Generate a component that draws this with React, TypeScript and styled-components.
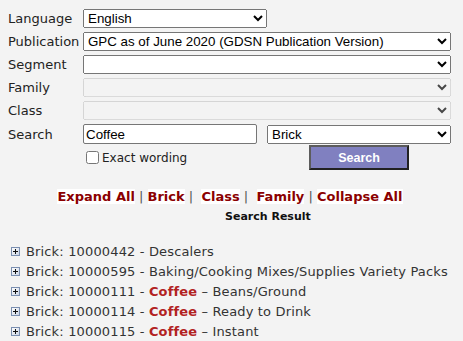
import styled, { createGlobalStyle } from "styled-components";

const GlobalStyle = createGlobalStyle`
  body {
    margin: 8px;
    background: #f3f3f3;
    font-family: "DejaVu Sans", Verdana, sans-serif;
    color: #222;
  }
`;

type Result = { code: string; keyword?: string; rest: string };

const results: Result[] = [
  { code: "10000442", rest: "Descalers" },
  { code: "10000595", rest: "Baking/Cooking Mixes/Supplies Variety Packs" },
  { code: "10000111", keyword: "Coffee", rest: "Beans/Ground" },
  { code: "10000114", keyword: "Coffee", rest: "Ready to Drink" },
  { code: "10000115", keyword: "Coffee", rest: "Instant" },
];

const PlusIcon = () => (
  <svg width="9" height="9" viewBox="0 0 9 9">
    <defs>
      <linearGradient id="pg" x1="0" y1="0" x2="1" y2="1">
        <stop offset="0" stopColor="#ffffff" />
        <stop offset="1" stopColor="#c9d3e3" />
      </linearGradient>
    </defs>
    <rect x="0.5" y="0.5" width="8" height="8" fill="url(#pg)" stroke="#7b8fb0" />
    <path d="M2 4.5h5M4.5 2v5" stroke="#111" strokeWidth="1" />
  </svg>
);

export default function App() {
  return (
    <>
      <GlobalStyle />
      <Form>
        <Label>Language</Label>
        <Select $width={184} defaultValue="en">
          <option value="en">English</option>
        </Select>
        <Label>Publication</Label>
        <Select defaultValue="gpc">
          <option value="gpc">GPC as of June 2020 (GDSN Publication Version)</option>
        </Select>
        <Label>Segment</Label>
        <Select defaultValue="">
          <option value=""></option>
        </Select>
        <Label>Family</Label>
        <Select disabled defaultValue="">
          <option value=""></option>
        </Select>
        <Label>Class</Label>
        <Select disabled defaultValue="">
          <option value=""></option>
        </Select>
        <Label>Search</Label>
        <SearchRow>
          <TextInput defaultValue="Coffee" />
          <Select $width={184} defaultValue="brick">
            <option value="brick">Brick</option>
          </Select>
        </SearchRow>
        <OptionsRow>
          <CheckLabel>
            <Check type="checkbox" />
            Exact wording
          </CheckLabel>
          <ButtonCell>
            <SearchButton type="button">Search</SearchButton>
          </ButtonCell>
        </OptionsRow>
      </Form>

      <Links>
        <Link>Expand All</Link>
        <Sep> | </Sep>
        <Link>Brick</Link>
        <Sep> |&nbsp; </Sep>
        <Link>Class</Link>
        <Sep> |&nbsp; </Sep>
        <Link>Family</Link>
        <Sep> | </Sep>
        <Link>Collapse All</Link>
      </Links>
      <ResultTitle>Search Result</ResultTitle>

      <ResultList>
        {results.map((r) => (
          <ResultRow key={r.code}>
            <PlusIcon />
            <span>
              Brick: {r.code} -{" "}
              {r.keyword ? (
                <>
                  <Keyword>{r.keyword}</Keyword> – {r.rest}
                </>
              ) : (
                r.rest
              )}
            </span>
          </ResultRow>
        ))}
      </ResultList>
    </>
  );
}

const Form = styled.div`
  display: grid;
  grid-template-columns: 75px 368px;
  row-gap: 4px;
  align-items: center;
  padding-top: 1px;
`;

const Label = styled.div`
  font-size: 13px;
  color: #222;
`;

const Select = styled.select<{ $width?: number }>`
  width: ${(p) => (p.$width ? `${p.$width}px` : "100%")};
  height: 19px;
  box-sizing: border-box;
  font-family: Arial, "Liberation Sans", sans-serif;
  font-size: 13.33px;
  color: #000;
`;

const SearchRow = styled.div`
  display: flex;
  gap: 10px;
  align-items: center;
`;

const TextInput = styled.input`
  width: 174px;
  height: 20px;
  box-sizing: border-box;
  padding: 1px 2px;
  border: 1px solid #767676;
  border-radius: 2px;
  background: #fff;
  font-family: Arial, "Liberation Sans", sans-serif;
  font-size: 13.33px;
  color: #000;
`;

const OptionsRow = styled.div`
  grid-column: 2;
  display: flex;
  align-items: center;
  margin-top: -3px;
`;

const CheckLabel = styled.label`
  width: 184px;
  display: flex;
  align-items: center;
  gap: 3px;
  font-size: 12px;
  color: #222;
`;

const Check = styled.input`
  width: 13px;
  height: 13px;
  margin: 0 0 0 3px;
`;

const ButtonCell = styled.div`
  width: 184px;
  display: flex;
  justify-content: center;
`;

const SearchButton = styled.button`
  width: 100px;
  height: 25px;
  box-sizing: border-box;
  background: #8080c0;
  color: #fff;
  border: 2px solid;
  border-color: #5c5c5c #222 #222 #5c5c5c;
  font-family: Arial, "Liberation Sans", sans-serif;
  font-weight: bold;
  font-size: 12.5px;
  padding: 0;
`;

const Links = styled.div`
  margin-top: 19px;
  padding-right: 3px;
  text-align: center;
  font-size: 13px;
  font-weight: bold;
  line-height: 16px;
`;

const Link = styled.span`
  color: #8b0000;
  background: #fff;
`;

const Sep = styled.span`
  color: #555;
  font-weight: normal;
  white-space: pre;
`;

const ResultTitle = styled.div`
  margin-top: 5px;
  padding-left: 217px;
  font-size: 11px;
  font-weight: bold;
  color: #111;
`;

const ResultList = styled.ul`
  list-style: none;
  margin: 18px 0 0;
  padding: 0 0 0 3px;
`;

const ResultRow = styled.li`
  display: flex;
  align-items: center;
  gap: 6px;
  height: 20px;
  font-size: 13px;
  letter-spacing: 0.15px;
  color: #333;
`;

const Keyword = styled.span`
  color: #b22222;
  font-weight: bold;
`;
